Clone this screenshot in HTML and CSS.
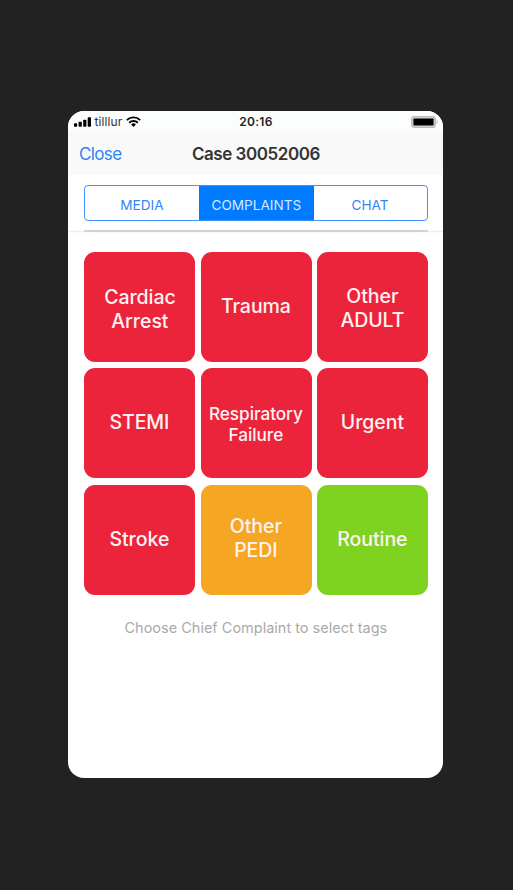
FILE: index.html
```html
<!DOCTYPE html>
<html lang="en">
<head>
<meta charset="utf-8">
<title>Case 30052006</title>
<link rel="stylesheet" href="styles.css">
</head>
<body>
<main class="phone">
  <div class="status">
    <div class="carrier">
      <svg class="signal" width="17" height="10" viewBox="0 0 17 10"><rect x="0" y="6.3" width="3.2" height="3.4" rx=".7"/><rect x="4.6" y="4.7" width="3.2" height="5" rx=".7"/><rect x="9.2" y="2.7" width="3.2" height="7" rx=".7"/><rect x="13.7" y="0.3" width="3.3" height="9.4" rx=".7"/></svg>
      <span class="carrier-name">tilllur</span>
      <svg class="wifi" width="15" height="11" viewBox="0 0 15 11"><g fill="none" stroke="#000" stroke-width="1.9"><path d="M.8 4.1a9.7 9.7 0 0 1 13.4 0"/><path d="M3.2 6.7a6.2 6.2 0 0 1 8.6 0"/></g><path d="M5.1 8.5a3.5 3.5 0 0 1 4.8 0L7.5 11z"/></svg>
    </div>
    <time class="clock">20:16</time>
    <svg class="battery" width="27" height="12" viewBox="0 0 27 12"><rect x=".8" y=".8" width="23.4" height="10.4" rx="2.3" fill="#ddd" stroke="#bbb" stroke-width="1.5"/><rect x="2.4" y="2.5" width="20.2" height="7" rx=".7"/><path d="M25.5 4v4q1.2-.5 1.2-2t-1.2-2z" fill="#bbb"/></svg>
  </div>
  <header class="nav">
    <a class="close">Close</a>
    <h1 class="title">Case 30052006</h1>
  </header>
  <div class="tabs-wrap">
    <nav class="tabs">
      <span class="tab">MEDIA</span>
      <span class="tab active">COMPLAINTS</span>
      <span class="tab">CHAT</span>
    </nav>
  </div>
  <div class="rule"></div>
  <section class="grid">
    <div class="tile low-two">Cardiac<br>Arrest</div>
    <div class="tile">Trauma</div>
    <div class="tile two">Other<br>ADULT</div>
    <div class="tile">STEMI</div>
    <div class="tile small">Respiratory<br>Failure</div>
    <div class="tile">Urgent</div>
    <div class="tile">Stroke</div>
    <div class="tile orange">Other<br>PEDI</div>
    <div class="tile green">Routine</div>
  </section>
  <p class="hint">Choose Chief Complaint to select tags</p>
</main>
</body>
</html>
```

FILE: styles.css
```css
* { box-sizing: border-box; }
body {
  margin: 0;
  height: 890px;
  padding: 111.4px 0 0 68.4px;
  background: #222;
  font-family: Inter, "Liberation Sans", sans-serif;
  overflow: hidden;
}
.phone {
  width: 375px;
  height: 667px;
  background: #fff;
  border-radius: 16px;
  overflow: hidden;
}
.status {
  height: 20px;
  display: grid;
  grid-template-columns: 1fr auto 1fr;
  align-items: center;
  padding: 1px 5.5px 0;
  background: #fcfdfd;
}
.carrier { display: flex; align-items: center; }
.carrier-name {
  margin: 0 4px 0 3.5px;
  width: 28px;
  font-size: 12px;
  line-height: 19px;
  letter-spacing: .1px;
  color: #333;
  white-space: nowrap;
}
.clock { font-size: 12px; line-height: 18px; font-weight: 600; color: #222; letter-spacing: .3px; }
.battery { justify-self: end; }
.nav {
  height: 44px;
  display: grid;
  grid-template-columns: 1fr auto 1fr;
  align-items: center;
  padding: 1px 10.5px 0;
  background: #f9f9f9;
}
.close { font-size: 17px; color: #2c85f5; letter-spacing: -.6px; }
.title { margin: 0; font-size: 17px; font-weight: 600; color: #333; letter-spacing: -.45px; }
.tabs-wrap { height: 55px; padding: 10px 15.7px 0 16px; }
.tabs {
  height: 36px;
  display: grid;
  grid-template-columns: 114px 115px 1fr;
  border: 1px solid #3f93ff;
  border-radius: 4px;
  overflow: hidden;
}
.tab {
  display: flex;
  align-items: center;
  justify-content: center;
  padding: 4px 1px 0 0;
  font-size: 13.6px;
  color: #3187f4;
}
.tab.active { background: #007aff; color: #d5e8ff; }
.rule {
  height: 1.5px;
  margin: 0 15.3px 0 16px;
  background: #d2d2d2;
  box-shadow: -16px .5px 0 -.25px #eee, 16px .5px 0 -.25px #eee;
}
.grid {
  display: grid;
  grid-template-columns: repeat(3, 111px);
  grid-template-rows: repeat(3, 110px);
  column-gap: 5.5px;
  row-gap: 6.5px;
  padding: 20px 0 0 16px;
}
.tile {
  display: flex;
  align-items: center;
  justify-content: center;
  text-align: center;
  padding: 0 1px 2px 0;
  border-radius: 11px;
  background: #eb233b;
  color: #fff2f2;
  font-size: 19.5px;
  line-height: 24px;
  letter-spacing: -.05px;
  font-weight: 500;
}
.tile.two { padding: 2px 1px 0 0; }
.tile.low-two { padding: 4px 0 0; }
.tile.small { font-size: 17.2px; line-height: 21px; padding: 1.6px 1px 0 0; }
.tile.orange { padding-bottom: 4px; background: #f5a623; }
.tile.green { background: #7ed321; }
.hint {
  margin: 23.6px 0 0;
  text-align: center;
  font-size: 14.5px;
  line-height: 20px;
  color: #aaa;
}
```
